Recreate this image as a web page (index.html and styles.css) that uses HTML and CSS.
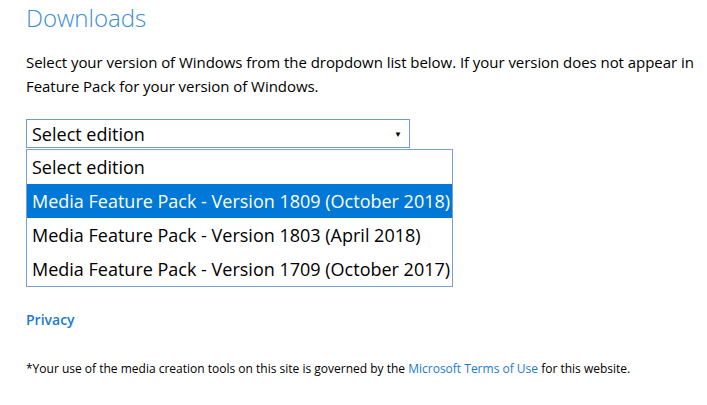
FILE: index.html
```html
<!DOCTYPE html>
<html>
<head>
<meta charset="utf-8">
<link rel="stylesheet" href="styles.css">
</head>
<body>
<main class="page">
  <h1 class="title">Downloads</h1>
  <p class="intro">Select your version of Windows from the dropdown list below. If your version does not appear in<br>Feature Pack for your version of Windows.</p>
  <div class="select-wrap">
    <div class="select">
      <span class="select-value">Select edition</span>
      <span class="caret">&#9660;</span>
    </div>
    <ul class="options">
      <li class="option">Select edition</li>
      <li class="option selected">Media Feature Pack - Version 1809 (October 2018)</li>
      <li class="option">Media Feature Pack - Version 1803 (April 2018)</li>
      <li class="option">Media Feature Pack - Version 1709 (October 2017)</li>
    </ul>
  </div>
  <a class="privacy" href="#">Privacy</a>
  <p class="footnote">*Your use of the media creation tools on this site is governed by the <a class="link" href="#">Microsoft Terms of Use</a> for this website.</p>
</main>
</body>
</html>
```
FILE: styles.css
```css
html, body {
  margin: 0;
  padding: 0;
  background: #fff;
  overflow: hidden;
}
body {
  font-family: "Open Sans", "Noto Sans", sans-serif;
  color: #000;
  width: 707px;
  height: 405px;
}
.page {
  padding: 0 0 0 26px;
  display: flex;
  flex-direction: column;
  align-items: flex-start;
}
.title {
  margin: 0;
  font-weight: 300;
  font-size: 24px;
  line-height: 36px;
  color: #3b8de0;
}
.intro {
  margin: 14px 0 0;
  white-space: nowrap;
  font-size: 15px;
  line-height: 24px;
  letter-spacing: -0.05px;
}
.select-wrap {
  margin-top: 21px;
  display: flex;
  flex-direction: column;
  align-items: flex-start;
}
.select {
  box-sizing: border-box;
  width: 384px;
  height: 29px;
  border: 1px solid #6f9ad6;
  display: flex;
  align-items: center;
  justify-content: space-between;
  padding: 0 6px 0 5px;
  font-size: 18px;
}
.caret {
  font-size: 8px;
  color: #000;
  margin-right: 1px;
}
.options {
  list-style: none;
  margin: 1px 0 0;
  padding: 0;
  box-sizing: border-box;
  width: 427px;
  border: 1px solid #7a9fd6;
}
.option {
  height: 34px;
  line-height: 34px;
  padding-left: 5px;
  font-size: 18px;
  white-space: nowrap;
}
.option.selected {
  background: #0078d7;
  color: #fff;
}
.privacy {
  margin-top: 23px;
  font-size: 14px;
  font-weight: 600;
  color: #1a7ad3;
  text-decoration: none;
}
.footnote {
  margin: 31px 0 0;
  font-size: 12px;
  line-height: 18px;
}
.link {
  color: #1a7ad3;
  text-decoration: none;
}
```
